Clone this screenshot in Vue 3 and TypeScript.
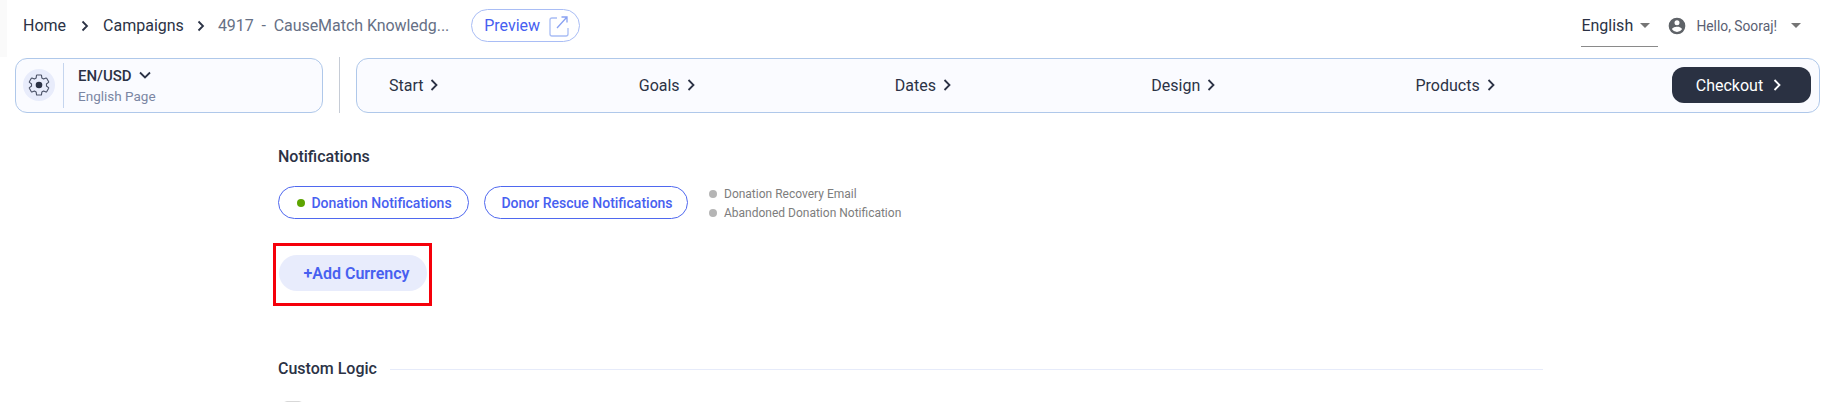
<script setup lang="ts">
const crumbs: string[] = ["Home", "Campaigns"];
const steps: string[] = ["Start", "Goals", "Dates", "Design", "Products"];
const emails: string[] = ["Donation Recovery Email", "Abandoned Donation Notification"];
</script>

<template>
  <div class="page">
    <header class="topbar">
      <nav class="crumbs">
        <template v-for="c in crumbs" :key="c">
          <span class="crumb">{{ c }}</span>
          <svg class="crumb-arrow" width="10" height="12" viewBox="0 0 10 12">
            <path d="M2.500 1.500 7 6l-4.500 4.500" fill="none" stroke="#2b3245" stroke-width="1.800" />
          </svg>
        </template>
        <span class="crumb current">4917 &nbsp;-&nbsp; CauseMatch Knowledg...</span>
        <button class="preview">
          Preview
          <svg width="20" height="22" viewBox="0 0 20 22" fill="none" stroke="#a9bdf5" stroke-width="1.300">
            <path d="M8 3H3a2 2 0 0 0-2 2v14a2 2 0 0 0 2 2h14a2 2 0 0 0 2-2v-6" />
            <path d="M8 13 18 2M12.500 2H18v5.500" stroke="#8aa2f2" />
          </svg>
        </button>
      </nav>
      <div class="account">
        <div class="lang">
          <span>English</span>
          <i class="caret"></i>
        </div>
        <svg class="user" width="20" height="20" viewBox="0 0 24 24" fill="#5f6368">
          <path d="M12 2a10 10 0 1 0 0 20 10 10 0 0 0 0-20zm0 3a3 3 0 1 1 0 6 3 3 0 0 1 0-6zm0 14.200a7.200 7.200 0 0 1-6-3.220c.03-1.990 4-3.080 6-3.080s5.970 1.090 6 3.080a7.200 7.200 0 0 1-6 3.220z" />
        </svg>
        <span class="hello">Hello, Sooraj!</span>
        <i class="caret"></i>
      </div>
    </header>

    <section class="toolbar">
      <div class="locale">
        <span class="gear">
          <svg width="24" height="24" viewBox="0 0 24 24" fill="none" stroke="#4a5166" stroke-width="1.100" stroke-linejoin="round">
            <path d="M19.430 12.980c.04-.32.07-.64.07-.98 0-.34-.03-.66-.07-.98l2.110-1.650c.19-.15.24-.42.12-.64l-2-3.460c-.09-.16-.26-.25-.44-.25-.06 0-.12.01-.17.03l-2.490 1c-.52-.4-1.080-.73-1.690-.98l-.38-2.650C14.460 2.180 14.250 2 14 2h-4c-.25 0-.46.18-.49.42l-.38 2.650c-.61.25-1.170.59-1.690.98l-2.490-1c-.06-.02-.12-.03-.18-.03-.17 0-.34.09-.43.25l-2 3.460c-.13.22-.07.49.12.64l2.110 1.650c-.04.32-.07.65-.07.98 0 .33.03.66.07.98l-2.110 1.650c-.19.15-.24.42-.12.64l2 3.460c.09.16.26.25.44.25.06 0 .12-.01.17-.03l2.490-1c.52.4 1.080.73 1.690.98l.38 2.650c.03.24.24.42.49.42h4c.25 0 .46-.18.49-.42l.38-2.650c.61-.25 1.170-.59 1.690-.98l2.490 1c.06.02.12.03.18.03.17 0 .34-.09.43-.25l2-3.460c.12-.22.07-.49-.12-.64l-2.110-1.650z" />
            <circle cx="12" cy="12" r="3.300" fill="#2b3245" stroke="none" />
          </svg>
        </span>
        <div class="locale-text">
          <div class="locale-name">
            EN/USD
            <svg width="14" height="9" viewBox="0 0 14 9">
              <path d="M2 1.500 7 6.500l5-5" fill="none" stroke="#2b3245" stroke-width="1.800" />
            </svg>
          </div>
          <div class="locale-sub">English Page</div>
        </div>
      </div>
      <div class="vline"></div>
      <div class="steps">
        <span v-for="s in steps" :key="s" class="step">
          {{ s }}
          <svg width="10" height="14" viewBox="0 0 10 14">
            <path d="M2.500 2 7.500 7l-5 5" fill="none" stroke="#2b3245" stroke-width="1.800" />
          </svg>
        </span>
        <button class="checkout">
          Checkout
          <svg width="10" height="14" viewBox="0 0 10 14">
            <path d="M2.500 2 7.500 7l-5 5" fill="none" stroke="#fff" stroke-width="1.800" />
          </svg>
        </button>
      </div>
    </section>

    <main class="content">
      <h2 class="title">Notifications</h2>
      <div class="notify-row">
        <button class="pill"><i class="dot green"></i>Donation Notifications</button>
        <button class="pill wide">Donor Rescue Notifications</button>
        <ul class="emails">
          <li v-for="e in emails" :key="e"><i class="dot grey"></i>{{ e }}</li>
        </ul>
      </div>
      <div class="add-box">
        <button class="add">+Add Currency</button>
      </div>
      <div class="logic">
        <h2 class="title">Custom Logic</h2>
        <div class="rule"></div>
      </div>
      <div class="check"></div>
    </main>
  </div>
</template>

<style>
html,
body {
  background: #fff;
  overflow: hidden;
}
</style>

<style scoped>
.page {
  width: 1825px;
  height: 402px;
  overflow: hidden;
  font-family: Roboto, "Liberation Sans", sans-serif;
  color: #2b3245;
  background: #fff;
}

.topbar {
  display: flex;
  justify-content: space-between;
  align-items: center;
  height: 57px;
  padding: 0 24px 6px 23px;
  box-sizing: border-box;
  background: linear-gradient(to right, #fafafa 7px, #fff 7px);
}

.crumbs {
  display: flex;
  align-items: center;
}

.crumb {
  font-size: 16px;
}

.crumb-arrow {
  margin: 0 13px 0 14px;
}

.crumb-arrow:nth-of-type(2) {
  margin: 0 12px 0 12px;
}

.current {
  color: #667085;
  margin-right: 22px;
  letter-spacing: -0.05px;
}

button {
  font-family: inherit;
  cursor: pointer;
}

.preview {
  display: flex;
  align-items: center;
  gap: 9px;
  width: 109px;
  height: 33px;
  padding: 0 0 0 12px;
  border: 1px solid #a9bdf5;
  border-radius: 17px;
  background: #fff;
  color: #4760f0;
  font-size: 16px;
}

.account {
  display: flex;
  align-items: center;
}

.lang {
  display: flex;
  align-items: center;
  gap: 7px;
  width: 77px;
  height: 41px;
  margin-right: 9px;
  border-bottom: 1px solid #8a8a8a;
  font-size: 16px;
  color: #2b3245;
}

.caret {
  display: block;
  width: 0;
  height: 0;
  border-left: 5px solid transparent;
  border-right: 5px solid transparent;
  border-top: 5px solid #757575;
}

.user {
  margin-right: 9px;
}

.hello {
  font-size: 13.800px;
  color: #5a6072;
  margin-right: 14px;
}

.toolbar {
  display: flex;
  align-items: center;
  height: 56px;
  padding: 0 5px 0 15px;
}

.locale {
  display: flex;
  align-items: center;
  width: 308px;
  height: 55px;
  box-sizing: border-box;
  padding: 4px 7px;
  border: 1px solid #afc8ea;
  border-radius: 12px;
  background: #fafbff;
}

.gear {
  display: flex;
  align-items: center;
  justify-content: center;
  width: 32px;
  height: 32px;
  border-radius: 50%;
  background: #e8ecfb;
  flex: none;
}

.locale-text {
  display: flex;
  flex-direction: column;
  justify-content: center;
  align-self: stretch;
  margin-left: 8px;
  padding-left: 14px;
  border-left: 1px solid #c5d5ee;
}

.locale-name {
  display: flex;
  align-items: center;
  gap: 6px;
  font-size: 15px;
  font-weight: 500;
}

.locale-sub {
  margin-top: 3px;
  font-size: 13.500px;
  color: #7b86a3;
}

.vline {
  width: 1px;
  height: 56px;
  margin: 0 16px;
  background: #c6ccd6;
}

.steps {
  display: flex;
  align-items: center;
  justify-content: space-between;
  flex: 1;
  height: 55px;
  box-sizing: border-box;
  padding: 0 8px 0 32px;
  border: 1px solid #afc8ea;
  border-radius: 12px;
  background: #fafbff;
}

.step {
  display: flex;
  align-items: center;
  gap: 6px;
  font-size: 16px;
}

.checkout {
  display: flex;
  align-items: center;
  justify-content: center;
  gap: 9px;
  width: 139px;
  height: 36px;
  margin-left: -23px;
  padding: 0 5px 0 0;
  border: 0;
  border-radius: 12px;
  background: #2a3142;
  color: #fff;
  font-size: 16px;
}

.content {
  padding: 35px 282px 0 278px;
}

.title {
  margin: 0;
  font-size: 16px;
  line-height: 18px;
  font-weight: 500;
  color: #2b3245;
}

.notify-row {
  display: flex;
  align-items: center;
  height: 33px;
  margin-top: 20px;
}

.pill {
  display: flex;
  align-items: center;
  justify-content: center;
  width: 191px;
  height: 33px;
  padding: 0 0 0 2px;
  border: 1px solid #4f68ef;
  border-radius: 17px;
  background: #fff;
  color: #4760f0;
  font-size: 14px;
  font-weight: 500;
}

.pill.wide {
  width: 204px;
  margin-left: 15px;
}

.dot {
  display: inline-block;
  flex: none;
  width: 8px;
  height: 8px;
  border-radius: 50%;
}

.green {
  margin-right: 6px;
  background: #5da400;
}

.grey {
  margin-right: 7px;
  background: #b5b5b5;
}

.emails {
  margin: 2px 0 0 21px;
  padding: 0;
  list-style: none;
  font-size: 12px;
  line-height: 18.500px;
  color: #7d7d7d;
}

.emails li {
  display: flex;
  align-items: center;
}

.add-box {
  width: 159px;
  height: 63px;
  box-sizing: border-box;
  margin: 24px 0 0 -5px;
  padding: 9px 0 0 3px;
  border: 3px solid #f5000a;
}

.add {
  display: block;
  width: 148px;
  height: 36px;
  padding: 0 0 0 7px;
  border: 0;
  border-radius: 18px;
  background: #e8ecfc;
  color: #4760f0;
  font-size: 16px;
  font-weight: 600;
}

.logic {
  display: flex;
  align-items: center;
  gap: 13px;
  margin-top: 54px;
}

.rule {
  flex: 1;
  height: 1px;
  background: #e6ebfa;
}

.check {
  width: 18px;
  height: 18px;
  margin: 23px 0 0 5px;
  border: 1px solid #d8d8d8;
  border-radius: 4px;
}
</style>
